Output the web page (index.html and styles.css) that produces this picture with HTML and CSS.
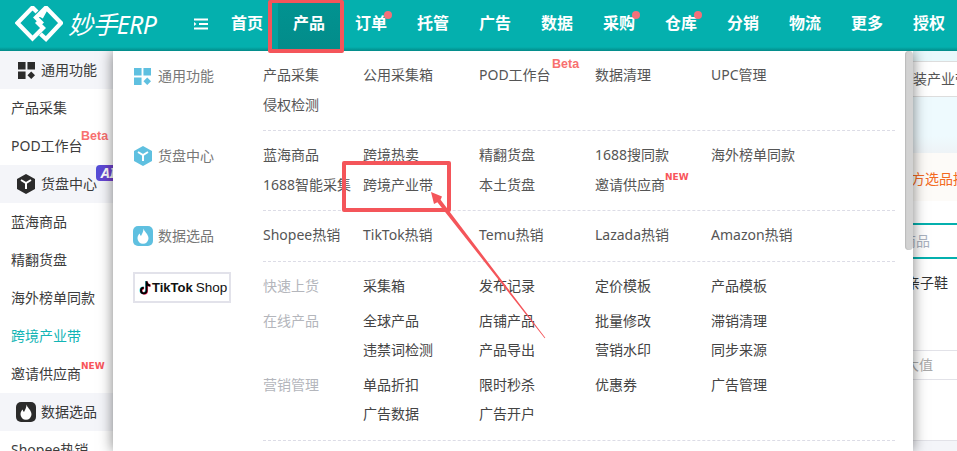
FILE: index.html
```html
<!DOCTYPE html>
<html lang="zh-CN">
<head>
<meta charset="utf-8">
<title>妙手ERP</title>
<link rel="stylesheet" href="styles.css">
</head>
<body>
<header class="topbar">
  <div class="logo">
    <svg class="logo-mark" viewBox="0 0 48 36" width="48" height="36"><path d="M22 6 L17.500 1.500 L2.500 17 L17.500 32.500 L28 22 L21.500 15.500 M33 6 M26 11.500 L31.500 1.500 M25.500 28 L31 33 L46 17 L31 1.500 L21 11.500 L27.500 18" fill="none" stroke="#fff" stroke-width="4.200"/></svg>
    <span class="logo-text">妙手ERP</span>
  </div>
  <svg class="menu-icon" viewBox="0 0 16 12" width="16" height="12"><path d="M1 1.500H15M6 6H15M1 10.500H15" stroke="#fff" stroke-width="2"/><path d="M1 4L3.500 6L1 8Z" fill="#fff"/></svg>
  <nav class="nav">
    <a class="nav-item">首页</a>
    <a class="nav-item active">产品</a>
    <a class="nav-item dot">订单</a>
    <a class="nav-item">托管</a>
    <a class="nav-item">广告</a>
    <a class="nav-item">数据</a>
    <a class="nav-item dot">采购</a>
    <a class="nav-item dot">仓库</a>
    <a class="nav-item">分销</a>
    <a class="nav-item">物流</a>
    <a class="nav-item">更多</a>
    <a class="nav-item">授权</a>
  </nav>
</header>

<div class="body-row">
  <aside class="sidebar">
    <div class="side-head"><svg class="side-icon" viewBox="0 0 18 18"><path d="M0 0h8v8H0zM10 0h8v8h-8zM0 10h8v8H0z" fill="#2b2b2b"/><path d="M14 10l4 4-4 4-4-4z" fill="#2b2b2b"/></svg>通用功能</div>
    <div class="side-link">产品采集</div>
    <div class="side-link">POD工作台<b class="beta side-beta">Beta</b></div>
    <div class="side-head"><svg class="side-icon icon-hex" viewBox="0 0 18 20"><path d="M9 0l9 5v10l-9 5-9-5V5z" fill="#2b2b2b"/><path d="M4 6l5 3 5-3M9 9v6" stroke="#fff" stroke-width="2" fill="none"/></svg>货盘中心<b class="ai-tag">AI</b></div>
    <div class="side-link">蓝海商品</div>
    <div class="side-link">精翻货盘</div>
    <div class="side-link">海外榜单同款</div>
    <div class="side-link current">跨境产业带</div>
    <div class="side-link">邀请供应商<b class="new side-new">NEW</b></div>
    <div class="side-head"><svg class="side-icon icon-fire" viewBox="0 0 20 20"><rect width="20" height="20" rx="5" fill="#2b2b2b"/><path d="M10.500 2.500c.5 3 5 5.500 5 9.800a5.500 5.500 0 0 1-11 0c0-2.300 1-3.800 2.300-4.800 0 1.200.6 2 1.200 2.500.9-2 2.500-4.500 2.500-7.500z" fill="#fff"/></svg>数据选品</div>
    <div class="side-link">Shopee热销</div>
  </aside>
  <main class="backdrop">
    <div class="bg-tabs">装产业带</div>
    <div class="bg-banner"></div>
    <div class="bg-notice">方选品推</div>
    <div class="bg-filter">商品</div>
    <div class="bg-cat">亲子鞋</div>
    <div class="bg-range">大值</div>
    <div class="bg-foot"></div>
  </main>
</div>

<section class="panel">
  <div class="group group-tall">
    <div class="group-title"><svg class="g-icon" viewBox="0 0 18 18"><path d="M0 0h8v8H0zM10 0h8v8h-8zM0 10h8v8H0z" fill="#5fc0e0"/><path d="M14 10l4 4-4 4-4-4z" fill="#5fc0e0"/></svg>通用功能</div>
    <div class="links">
      <a>产品采集</a><a>公用采集箱</a><a>POD工作台<b class="beta">Beta</b></a><a>数据清理</a><a>UPC管理</a><a>侵权检测</a>
    </div>
  </div>
  <div class="group group-tall">
    <div class="group-title"><svg class="g-icon g-hex" viewBox="0 0 18 20"><path d="M9 0l9 5v10l-9 5-9-5V5z" fill="#5fc0e0"/><path d="M4 6l5 3 5-3M9 9v6" stroke="#fff" stroke-width="2" fill="none"/></svg>货盘中心</div>
    <div class="links">
      <a>蓝海商品</a><a>跨境热卖</a><a>精翻货盘</a><a>1688搜同款</a><a>海外榜单同款</a><a>1688智能采集</a><a>跨境产业带</a><a>本土货盘</a><a>邀请供应商<b class="new">NEW</b></a>
    </div>
  </div>
  <div class="group group-single">
    <div class="group-title"><svg class="g-icon g-fire" viewBox="0 0 20 20"><rect width="20" height="20" rx="5" fill="#5fc0e0"/><path d="M10.500 2.500c.5 3 5 5.500 5 9.800a5.500 5.500 0 0 1-11 0c0-2.300 1-3.800 2.300-4.800 0 1.200.6 2 1.200 2.500.9-2 2.500-4.500 2.500-7.500z" fill="#fff"/></svg>数据选品</div>
    <div class="links">
      <a>Shopee热销</a><a>TikTok热销</a><a>Temu热销</a><a>Lazada热销</a><a>Amazon热销</a>
    </div>
  </div>
  <div class="group group-tiktok">
    <div class="tt-col">
      <div class="tt-box"><svg class="tt-note" viewBox="0 0 14 16" width="13" height="15"><path d="M8.800 1v10a3 3 0 1 1-3-3M8.800 2c.5 2 2 3.500 4 3.500" fill="none" stroke="#25d8d8" stroke-width="2.400"/><path d="M9.600 1.600v10a3 3 0 1 1-3-3M9.600 2.600c.5 2 2 3.500 4 3.500" fill="none" stroke="#f0285a" stroke-width="2.400"/><path d="M9.200 1.300v10a3 3 0 1 1-3-3M9.200 2.300c.5 2 2 3.500 4 3.500" fill="none" stroke="#000" stroke-width="2"/></svg><span class="tt-name">TikTok</span><span class="tt-shop">Shop</span></div>
    </div>
    <div class="sub-groups">
      <div class="sub">
        <div class="sub-title">快速上货</div>
        <div class="sub-links"><a>采集箱</a><a>发布记录</a><a>定价模板</a><a>产品模板</a></div>
      </div>
      <div class="sub">
        <div class="sub-title">在线产品</div>
        <div class="sub-links"><a>全球产品</a><a>店铺产品</a><a>批量修改</a><a>滞销清理</a><a>违禁词检测</a><a>产品导出</a><a>营销水印</a><a>同步来源</a></div>
      </div>
      <div class="sub">
        <div class="sub-title">营销管理</div>
        <div class="sub-links"><a>单品折扣</a><a>限时秒杀</a><a>优惠券</a><a>广告管理</a><a>广告数据</a><a>广告开户</a></div>
      </div>
    </div>
  </div>
  <div class="scrollbar"></div>
</section>

<div class="mark mark-nav"></div>
<div class="mark mark-link"></div>
<svg class="arrow" viewBox="0 0 125 155" width="125" height="155"><path d="M6 4 L17 8.500 L15.600 11.800 L120.300 149.800 L119.700 150.200 L12.400 14.200 L9 16 Z" fill="#f4555a"/></svg>
</body>
</html>
```
FILE: styles.css
```css
* { box-sizing: border-box; }
html, body { margin: 0; height: 451px; overflow: hidden; }
body {
  position: relative;
  width: 957px;
  background: #fff;
  font-family: "Noto Sans", "Noto Sans CJK SC", sans-serif;
  font-size: 14px;
  color: #333;
}
b { font-weight: 700; }

.topbar {
  position: relative;
  z-index: 2;
  height: 51px;
  display: flex;
  align-items: center;
  background: #04b0ae;
  background-image: linear-gradient(#04b0ae 47px, #038a88);
  color: #fff;
}
.logo { display: flex; align-items: center; width: 193px; padding: 0 0 3px 15px; flex: none; }
.logo-mark { flex: none; }
.logo-text { font-size: 25px; line-height: 36px; font-style: italic; margin-left: 5px; letter-spacing: -.6px; font-weight: 400; white-space: nowrap; }
.menu-icon { flex: none; margin-bottom: 3px; }
.nav { display: flex; height: 51px; margin-left: 7px; }
.nav-item {
  position: relative;
  width: 62px;
  flex: none;
  display: flex;
  align-items: center;
  justify-content: center;
  padding-bottom: 5px;
  font-size: 16px;
  font-weight: 700;
  line-height: 22px;
}
.nav-item.active { background: linear-gradient(#019391, #038c8a); box-shadow: -6px 0 0 #04a09e; }
.nav-item.dot::after {
  content: "";
  position: absolute;
  top: 11px;
  left: 44px;
  width: 8px;
  height: 8px;
  border-radius: 50%;
  background: #f4707a;
}

.body-row { display: flex; height: 400px; }
.sidebar { width: 113px; flex: none; overflow: hidden; }
.side-head {
  position: relative;
  height: 38px;
  display: flex;
  align-items: center;
  padding-left: 18px;
  gap: 6px;
  background: #f4f5f9;
  font-size: 14px;
  color: #3a3a3a;
  line-height: 20px;
}
.side-icon { width: 17px; height: 17px; flex: none; }
.side-icon.icon-hex { width: 18px; height: 20px; margin-left: -1px; }
.side-icon.icon-fire { width: 20px; height: 20px; margin: 0 -1px 0 -2px; }
.side-link { position: relative; height: 38px; display: flex; align-items: center; padding-left: 11px; font-size: 14px; color: #3c3c3c; line-height: 20px; white-space: nowrap; }
.side-link.current { color: #12b5b5; }
.side-beta { position: absolute; left: 81px; top: 3px; }
.side-new { position: absolute; left: 81px; top: 7px; }
.ai-tag {
  position: absolute;
  left: 96px;
  top: 0;
  width: 17px;
  height: 16px;
  padding-left: 5px;
  border-radius: 4px 0 0 4px;
  background: linear-gradient(100deg, #4f4fd8, #7a3fd0);
  color: #fff;
  font-size: 14px;
  font-style: italic;
  line-height: 16px;
  overflow: hidden;
}
.beta { color: #f8706f; font-size: 12.500px; line-height: 12px; font-family: "Liberation Sans", sans-serif; }
.new { color: #f8555a; font-size: 9px; line-height: 9px; font-family: "DejaVu Sans", sans-serif; font-weight: 700; }

.backdrop { flex: 1; min-width: 0; display: flex; flex-direction: column; padding-top: 10px; font-size: 14px; line-height: 20px; overflow: hidden; background: linear-gradient(#e8f9fc 61px, #fff 61px); }
.backdrop > div { flex: none; width: 100%; white-space: nowrap; overflow: hidden; }
.bg-tabs { height: 36px; padding: 7px 0 0 800px; border-top: 1px solid #ddd; border-bottom: 1px solid #ddd; background: #fff; color: #555; }
.bg-banner { height: 56px; background: linear-gradient(#eefafe, #eefafe 70%, #eef3f6); }
.bg-notice { height: 48px; padding: 16px 0 0 798px; background: #fdfbf8; color: #f36a22; }
.bg-filter { height: 36px; margin-top: 22px; padding: 6px 0 0 789px; border-top: 2px solid #04b0ae; border-bottom: 2px solid #04b0ae; color: #aab2c0; }
.bg-cat { height: 91px; padding: 14px 0 0 793px; color: #333; background: #fff; }
.bg-range { height: 30px; padding: 4px 0 0 792px; border-top: 1px solid #e2e2e8; border-bottom: 1px solid #e2e2e8; color: #aaa; }
.bg-foot { height: 11px; margin-top: 60px; background: #f4f5f9; border-top: 1px solid #e2e2e8; }

.panel {
  position: absolute;
  left: 113px;
  top: 51px;
  width: 800px;
  height: 400px;
  padding: 0 18px 0 20px;
  background: #fff;
  box-shadow: 0 0 13px rgba(0, 0, 0, .5);
  clip-path: inset(0 -20px 0 -20px);
}
.group { display: flex; }
.group-tall { height: 80px; }
.group-single { height: 51px; }
.group-tiktok { height: 179px; }
.group-title {
  width: 130px;
  flex: none;
  height: 30px;
  margin-top: 10px;
  padding-left: 1px;
  display: flex;
  align-items: center;
  gap: 7px;
  font-size: 14px;
  line-height: 20px;
  color: #777;
}
.g-icon { width: 17px; height: 17px; flex: none; }
.g-icon.g-hex { width: 18px; height: 20px; margin-right: -1px; }
.g-icon.g-fire { width: 20px; height: 20px; margin: 0 -2px 0 -1px; }
.links, .sub-groups { flex: 1; border-bottom: 1px dashed #dcdce6; padding-top: 9px; }
.links { display: flex; flex-wrap: wrap; align-content: flex-start; }
.links a, .sub-links a { position: relative; width: 116px; height: 30px; line-height: 30px; font-size: 14px; color: #555; white-space: nowrap; }
.links a:nth-child(5n+1) { width: 100px; }
.links a .beta { position: absolute; left: 73px; top: -2px; }
.links a .new { position: absolute; left: 70px; top: 3px; }
.tt-col { width: 130px; flex: none; padding-top: 10px; }
.tt-box {
  width: 98px;
  height: 31px;
  display: flex;
  align-items: center;
  padding-left: 3px;
  border: 2px solid #e2e2ea;
  color: #111;
  white-space: nowrap;
}
.tt-note { flex: none; margin-right: 1px; }
.tt-name { font-weight: 700; font-size: 13px; font-family: "Liberation Sans", sans-serif; }
.tt-shop { margin-left: 3px; font-size: 13.500px; font-family: "Liberation Sans", sans-serif; }
.sub { display: flex; margin-bottom: 6px; }
.sub-title { width: 100px; flex: none; height: 29px; line-height: 29px; font-size: 14px; color: #b4b6bc; }
.sub-links { display: flex; flex-wrap: wrap; width: 464px; align-content: flex-start; }
.sub-links a { height: 29px; line-height: 29px; color: #444; }
.scrollbar {
  position: absolute;
  right: 0;
  top: 0;
  width: 8px;
  height: 199px;
  background: #d2d2d2;
  border-radius: 4px;
  box-shadow: inset 1px 0 1px #bbb;
}

.mark { position: absolute; z-index: 3; border: 4px solid #f4555a; border-radius: 2px; }
.mark-nav { left: 268px; top: 0; width: 76px; height: 53px; border-top-width: 3px; }
.mark-link { left: 342px; top: 161px; width: 109px; height: 51px; }
.arrow { position: absolute; z-index: 3; left: 425px; top: 188px; }
```
